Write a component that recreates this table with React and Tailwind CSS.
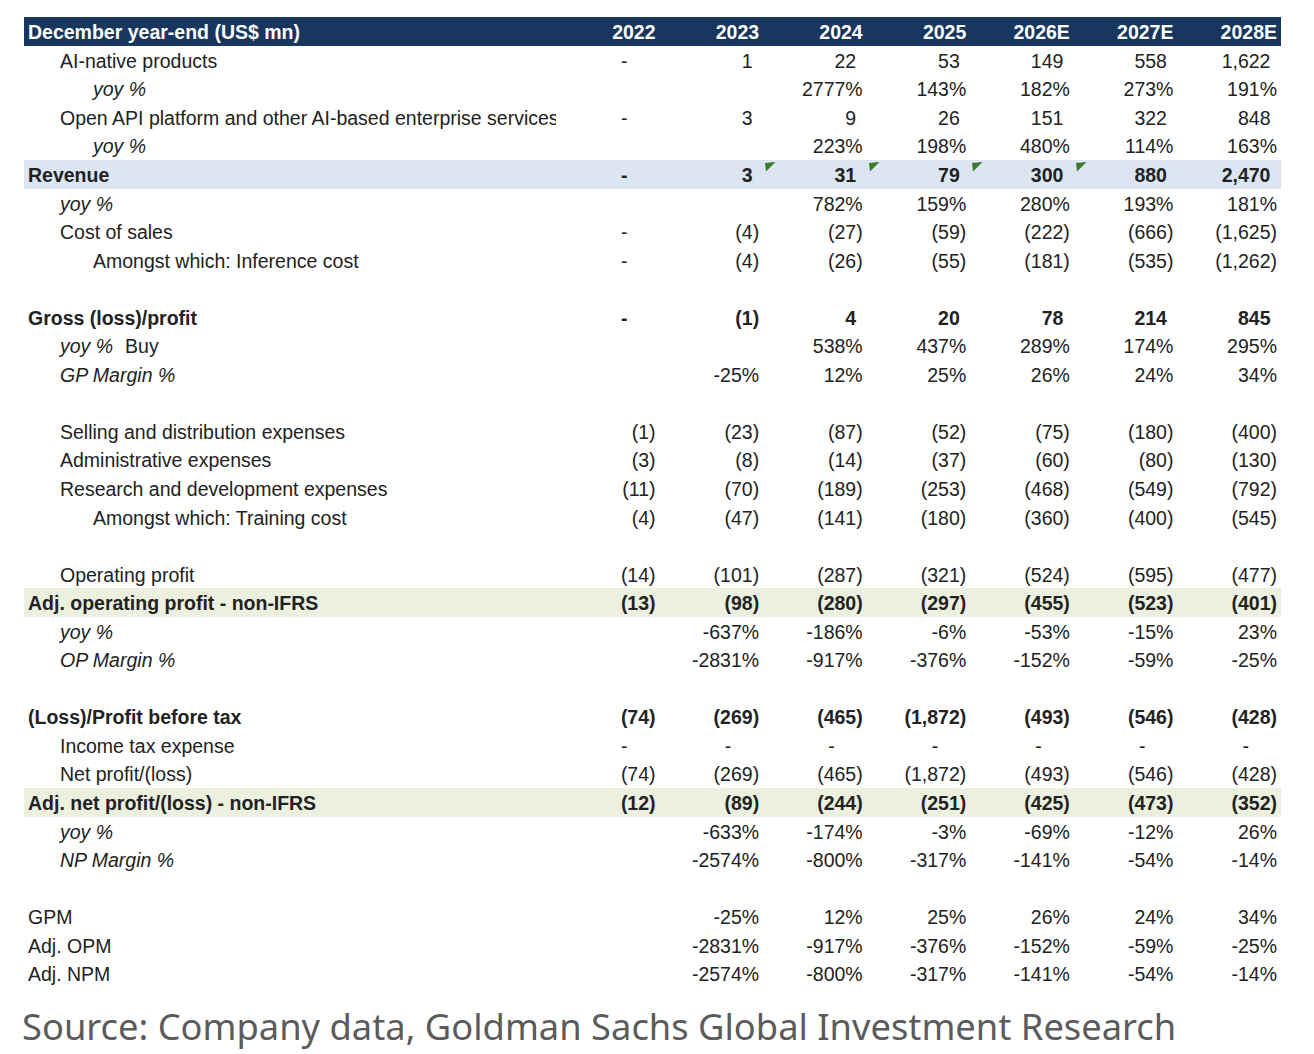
import React from 'react';

const years = ['2022', '2023', '2024', '2025', '2026E', '2027E', '2028E'];

// kind: bold / italic label, bg: highlight row colour, ind: indent level
const rows = [
    { label: 'AI-native products', ind: 1, vals: ['-', '1', '22', '53', '149', '558', '1,622'] },
    { label: 'yoy %', ind: 2, italic: true, vals: ['', '', '2777%', '143%', '182%', '273%', '191%'] },
    { label: 'Open API platform and other AI-based enterprise services', ind: 1, vals: ['-', '3', '9', '26', '151', '322', '848'] },
    { label: 'yoy %', ind: 2, italic: true, vals: ['', '', '223%', '198%', '480%', '114%', '163%'] },
    { label: 'Revenue', ind: 0, bold: true, bg: 'blue', flags: [2, 3, 4, 5], vals: ['-', '3', '31', '79', '300', '880', '2,470'] },
    { label: 'yoy %', ind: 1, italic: true, vals: ['', '', '782%', '159%', '280%', '193%', '181%'] },
    { label: 'Cost of sales', ind: 1, vals: ['-', '(4)', '(27)', '(59)', '(222)', '(666)', '(1,625)'] },
    { label: 'Amongst which: Inference cost', ind: 2, vals: ['-', '(4)', '(26)', '(55)', '(181)', '(535)', '(1,262)'] },
    { blank: true },
    { label: 'Gross (loss)/profit', ind: 0, bold: true, vals: ['-', '(1)', '4', '20', '78', '214', '845'] },
    { label: 'yoy %', extra: 'Buy', ind: 1, italic: true, vals: ['', '', '538%', '437%', '289%', '174%', '295%'] },
    { label: 'GP Margin %', ind: 1, italic: true, vals: ['', '-25%', '12%', '25%', '26%', '24%', '34%'] },
    { blank: true },
    { label: 'Selling and distribution expenses', ind: 1, vals: ['(1)', '(23)', '(87)', '(52)', '(75)', '(180)', '(400)'] },
    { label: 'Administrative expenses', ind: 1, vals: ['(3)', '(8)', '(14)', '(37)', '(60)', '(80)', '(130)'] },
    { label: 'Research and development expenses', ind: 1, vals: ['(11)', '(70)', '(189)', '(253)', '(468)', '(549)', '(792)'] },
    { label: 'Amongst which: Training cost', ind: 2, vals: ['(4)', '(47)', '(141)', '(180)', '(360)', '(400)', '(545)'] },
    { blank: true },
    { label: 'Operating profit', ind: 1, vals: ['(14)', '(101)', '(287)', '(321)', '(524)', '(595)', '(477)'] },
    { label: 'Adj. operating profit - non-IFRS', ind: 0, bold: true, bg: 'green', vals: ['(13)', '(98)', '(280)', '(297)', '(455)', '(523)', '(401)'] },
    { label: 'yoy %', ind: 1, italic: true, vals: ['', '-637%', '-186%', '-6%', '-53%', '-15%', '23%'] },
    { label: 'OP Margin %', ind: 1, italic: true, vals: ['', '-2831%', '-917%', '-376%', '-152%', '-59%', '-25%'] },
    { blank: true },
    { label: '(Loss)/Profit before tax', ind: 0, bold: true, vals: ['(74)', '(269)', '(465)', '(1,872)', '(493)', '(546)', '(428)'] },
    { label: 'Income tax expense', ind: 1, vals: ['-', '-', '-', '-', '-', '-', '-'] },
    { label: 'Net profit/(loss)', ind: 1, vals: ['(74)', '(269)', '(465)', '(1,872)', '(493)', '(546)', '(428)'] },
    { label: 'Adj. net profit/(loss) - non-IFRS', ind: 0, bold: true, bg: 'green', vals: ['(12)', '(89)', '(244)', '(251)', '(425)', '(473)', '(352)'] },
    { label: 'yoy %', ind: 1, italic: true, vals: ['', '-633%', '-174%', '-3%', '-69%', '-12%', '26%'] },
    { label: 'NP Margin %', ind: 1, italic: true, vals: ['', '-2574%', '-800%', '-317%', '-141%', '-54%', '-14%'] },
    { blank: true },
    { label: 'GPM', ind: 0, vals: ['', '-25%', '12%', '25%', '26%', '24%', '34%'] },
    { label: 'Adj. OPM', ind: 0, vals: ['', '-2831%', '-917%', '-376%', '-152%', '-59%', '-25%'] },
    { label: 'Adj. NPM', ind: 0, vals: ['', '-2574%', '-800%', '-317%', '-141%', '-54%', '-14%'] },
];

const indentClass = ['pl-[4px]', 'pl-[36px]', 'pl-[69px]'];
const bgClass = { blue: 'bg-[#dce6f2]', green: 'bg-[#ebf1de]' };

// accounting-style padding: dash sits left, positives leave room for ")"
const valuePad = (v) => {
    if (v === '-') return 'pr-[32px]';
    if (v.endsWith(')') || v.endsWith('%')) return 'pr-[4px]';
    return 'pr-[10.5px]';
};

const Flag = () => (
    <svg className="absolute left-[2px] top-[1px]" width="11" height="10" viewBox="0 0 11 10">
        <polygon points="0,1 10.5,0 1,9.5" fill="#3b7a26" />
    </svg>
);

const Row = ({ row }) => {
    if (row.blank) return <div className="h-[28.55px]" />;
    return (
        <div className={`grid grid-cols-[532px_repeat(7,1fr)] h-[28.55px] items-center pt-[1px] ${row.bg ? bgClass[row.bg] : ''} ${row.bold ? 'font-bold' : ''}`}>
            <div className={`${indentClass[row.ind]} whitespace-nowrap overflow-hidden`}>
                <span className={row.italic ? 'italic' : ''}>{row.label}</span>
                {row.extra && <span className="ml-[12px]">{row.extra}</span>}
            </div>
            {row.vals.map((v, i) => (
                <div key={i} className={`relative h-full flex items-center justify-end ${valuePad(v)}`}>
                    {row.flags && row.flags.includes(i) && <Flag />}
                    {v}
                </div>
            ))}
        </div>
    );
};

export default function App() {
    return (
        <div className="min-h-screen bg-white pt-[17px] pl-[24px]">
            <div className="w-[1257px] text-[19.5px] text-[#222] font-['Liberation_Sans',Arial,sans-serif] leading-[24px]">
                <div className="grid grid-cols-[532px_repeat(7,1fr)] h-[29px] items-center bg-[#17375e] text-white font-bold">
                    <div className="pl-[4px] whitespace-nowrap">December year-end (US$ mn)</div>
                    {years.map((y) => (
                        <div key={y} className="text-right pr-[4px]">{y}</div>
                    ))}
                </div>
                {rows.map((row, i) => (
                    <Row key={i} row={row} />
                ))}
            </div>
            <p className="mt-[17px] -ml-[2px] text-[36.3px] leading-[43px] text-[#5b5b5b] font-['Noto_Sans',sans-serif]">
                Source: Company data, Goldman Sachs Global Investment Research
            </p>
        </div>
    );
}
